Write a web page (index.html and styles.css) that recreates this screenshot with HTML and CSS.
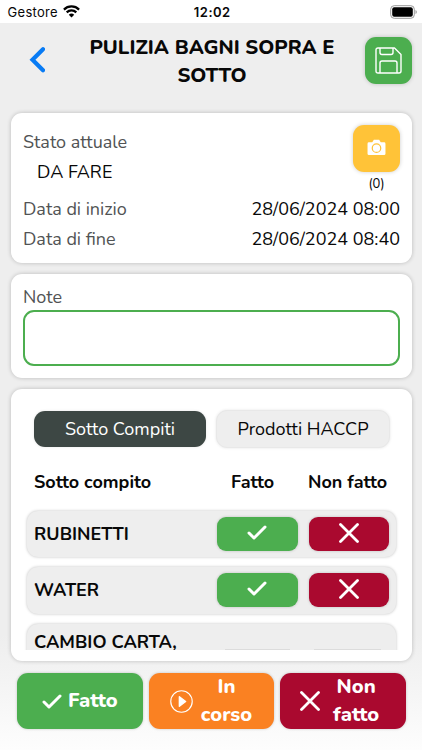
FILE: index.html
```
<!DOCTYPE html>
<html lang="it">
<head>
<meta charset="utf-8">
<meta name="viewport" content="width=device-width, initial-scale=1">
<title>Pulizia bagni</title>
<link rel="stylesheet" href="styles.css">
</head>
<body>
<svg class="defs" width="0" height="0" aria-hidden="true">
  <symbol id="check" viewBox="0 0 20 15"><path d="M2 8l5 5L18 2" fill="none" stroke="#fff" stroke-width="3" stroke-linecap="round" stroke-linejoin="round"/></symbol>
  <symbol id="cross" viewBox="0 0 20 20"><path d="M1.500 1.500l17 17M18.500 1.500l-17 17" fill="none" stroke="#fff" stroke-width="2.800" stroke-linecap="round"/></symbol>
</svg>
<div class="status">
  <div class="carrier"><span>Gestore</span>
    <svg width="17" height="13" viewBox="0 0 17 13"><path d="M.9 4.600a10.800 10.800 0 0 1 15.200 0M3.700 7.400a6.800 6.800 0 0 1 9.600 0" fill="none" stroke="#000" stroke-width="2.200"/><path d="M5.800 9.700a3.900 3.900 0 0 1 5.400 0l-2.700 2.700z"/></svg>
  </div>
  <div class="time">12:02</div>
  <svg class="battery" width="27" height="14" viewBox="0 0 27 14"><rect x=".7" y=".7" width="23.600" height="12.600" rx="3.500" fill="#fff" stroke="#999" stroke-width="1"/><rect x="2.200" y="2.200" width="20.600" height="9.600" rx="2"/><path d="M25.500 5q1.300 .5 1.300 2t-1.300 2z" fill="#999"/></svg>
</div>
<header class="header">
  <svg class="back" width="18" height="28" viewBox="0 0 18 28"><path d="M16 3.300L5.500 13.800 16 24.300" fill="none" stroke="#087bf4" stroke-width="4.200" stroke-linecap="round" stroke-linejoin="miter"/></svg>
  <h1 class="title">PULIZIA BAGNI SOPRA E<br>SOTTO</h1>
  <button class="square save" aria-label="Salva">
    <svg width="27" height="27" viewBox="0 0 27 27" fill="none" stroke="#fff" stroke-width="1.400" stroke-linejoin="round"><path d="M3 1h16.500l6.500 6.500V24q0 2-2 2H3q-2 0-2-2V3q0-2 2-2z"/><path d="M5 1v4.500q0 2 2 2h9q2 0 2-2V1M5 26V16q0-2 2-2h13q2 0 2 2v10"/></svg>
  </button>
</header>
<main class="content">
  <section class="card info">
    <div class="state-row">
      <div class="state"><div class="label">Stato attuale</div><div class="state-value">DA FARE</div></div>
      <div class="photo">
        <button class="square camera" aria-label="Foto"><svg width="19" height="17" viewBox="0 0 20 18"><path d="M2 3.500h3.500L7.200.8h5.600l1.700 2.700H18q1.500 0 1.500 1.500v10.500q0 1.500-1.500 1.500H2Q.5 17 .5 15.500V5q0-1.500 1.500-1.500z" fill="#fff"/><circle cx="10" cy="9.700" r="4.500" fill="#fff" stroke="#ffc338" stroke-width="1.300"/></svg></button>
        <span class="count">(0)</span>
      </div>
    </div>
    <div class="date-row"><span class="label">Data di inizio</span><span>28/06/2024 08:00</span></div>
    <div class="date-row"><span class="label">Data di fine</span><span>28/06/2024 08:40</span></div>
  </section>
  <section class="card notes">
    <div class="label">Note</div>
    <div class="note-box"></div>
  </section>
  <section class="card tasks">
    <div class="tabs"><button class="tab active">Sotto Compiti</button><button class="tab">Prodotti HACCP</button></div>
    <div class="columns"><span>Sotto compito</span><span class="c-done">Fatto</span><span class="c-not">Non fatto</span></div>
    <div class="list">
      <div class="task"><span class="name">RUBINETTI</span><button class="pill green"><svg width="20" height="15"><use href="#check"/></svg></button><button class="pill red"><svg width="20" height="20"><use href="#cross"/></svg></button></div>
      <div class="task"><span class="name">WATER</span><button class="pill green"><svg width="20" height="15"><use href="#check"/></svg></button><button class="pill red"><svg width="20" height="20"><use href="#cross"/></svg></button></div>
      <div class="task tall"><span class="name">CAMBIO CARTA,</span><i class="edge"></i><i class="edge"></i></div>
    </div>
  </section>
</main>
<footer class="actions">
  <button class="action green"><svg width="20" height="15"><use href="#check"/></svg><span>Fatto</span></button>
  <button class="action orange"><svg width="23" height="23" viewBox="0 0 24 24"><circle cx="12" cy="12" r="11.200" fill="none" stroke="#fff" stroke-width="1.200"/><path d="M9.800 7l6.500 5-6.500 5z" fill="#fff" stroke="#fff" stroke-width="1.500" stroke-linejoin="round"/></svg><span>In<br>corso</span></button>
  <button class="action red"><svg width="20" height="20"><use href="#cross"/></svg><span>Non<br>fatto</span></button>
</footer>
</body>
</html>
```
FILE: styles.css
```
* { box-sizing: border-box; }
html { background: #fff; }
body {
  margin: 0;
  width: 422px;
  height: 750px;
  overflow: hidden;
  background: linear-gradient(#eee 0, #eee 635px, #fdfdfd 750px);
  color: #080808;
  font-family: Nunito, Lato, sans-serif;
  font-size: 18px;
}
.defs { display: none; }
button { border: 0; margin: 0; padding: 0; font: inherit; color: inherit; }
svg { display: block; flex: none; }

.status {
  height: 23px;
  background: #fff;
  display: grid;
  grid-template-columns: 1fr auto 1fr;
  align-items: center;
  padding: 0 5px 0 7.500px;
  font-family: Inter, sans-serif;
  font-size: 13px;
}
.carrier { display: flex; align-items: center; gap: 5px; letter-spacing: .3px; }
.time { font-weight: 600; letter-spacing: .5px; }
.battery { justify-self: end; }

.header {
  height: 90px;
  display: grid;
  grid-template-columns: 18px 1fr 47px;
  padding: 10px 10px 0 27px;
}
.back { margin-top: 13px; }
.title {
  margin: 1px 0 0;
  text-align: center;
  font-size: 20.200px;
  font-weight: 800;
  line-height: 28px;
  padding-left: 14px;
  white-space: nowrap;
}
.square {
  flex: none;
  width: 47px;
  height: 47px;
  border-radius: 11px;
  display: flex;
  align-items: center;
  justify-content: center;
  box-shadow: 0 0 4px rgba(0, 0, 0, .2);
}
.save { background: #4cae4f; margin-top: 4px; }
.camera { background: #ffc338; padding-bottom: 2px; margin-top: .5px; }

.content { display: flex; flex-direction: column; gap: 11px; padding: 0 10px 0 11px; }
.card { background: #fff; border-radius: 11px; box-shadow: 0 0 4px rgba(0, 0, 0, .22); }
.info { height: 150px; padding: 11px 12px 0; }
.state-row { display: flex; justify-content: space-between; height: 70px; }
.state { padding-top: 3px; line-height: 30px; }
.state-value { padding-left: 14px; }
.label { color: #515354; }
.photo { display: flex; flex-direction: column; align-items: center; }
.count { font-size: 13px; line-height: 24px; }
.date-row { display: flex; justify-content: space-between; line-height: 30px; height: 30px; }
.notes { height: 104px; padding: 11px 12px 0; line-height: 25px; }
.note-box { height: 56px; border: 2px solid #4cae4f; border-radius: 11px; }

.tasks { height: 272px; padding: 21px 16px 11px; display: flex; flex-direction: column; }
.tabs { display: flex; align-items: center; gap: 10px; padding-left: 7px; height: 38px; flex: none; }
.tab {
  width: 174px;
  height: 38px;
  border-radius: 11px;
  background: #eee;
  border: 1px solid #e8e8e8;
  box-shadow: 0 0 3px rgba(0, 0, 0, .1);
}
.tab.active { width: 172px; height: 36px; background: #3d4744; color: #fff; border: 0; }
.columns {
  display: grid;
  grid-template-columns: 183px 81px 1fr;
  height: 64px;
  align-items: center;
  padding: 4px 0 0 7px;
  font-weight: 700;
  white-space: nowrap;
  flex: none;
}
.c-done { padding-left: 14px; }
.c-not { padding-left: 10px; }
.list {
  height: 142px;
  flex: none;
  overflow: hidden;
  display: flex;
  flex-direction: column;
  gap: 10px;
  margin: -4px -4px 0;
  padding: 3px 4px 0;
}
.task {
  height: 46.300px;
  flex: none;
  background: #eee;
  border-radius: 11px;
  box-shadow: 0 0 3px rgba(0, 0, 0, .25);
  display: grid;
  grid-template-columns: 183px 81px 80px;
  align-items: center;
  padding-left: 7px;
}
.name { font-weight: 700; }
.pill {
  height: 34px;
  border-radius: 9px;
  display: flex;
  align-items: center;
  justify-content: center;
  box-shadow: 0 0 3px rgba(0, 0, 0, .2);
}
.pill + .pill { margin: 0 -11px 0 11px; }
.pill.green svg { margin: 0 1px 3px 0; }
.pill.red svg { margin-bottom: 2px; }
.tall { height: 74px; align-items: start; padding-top: 4px; line-height: 28px; }
.edge { margin: 21px 8px 0; height: 2px; background: #dcdcdc; }
.edge + .edge { margin-left: 16px; margin-right: -3px; }
.green { background: #4cae4f; }
.red { background: #aa092f; }
.orange { background: #fa8122; }

.actions {
  display: grid;
  grid-template-columns: repeat(3, 1fr);
  gap: 6px;
  padding: 12px 16px 0 17px;
}
.action {
  height: 56px;
  border-radius: 11px;
  color: #fff;
  display: flex;
  align-items: center;
  justify-content: center;
  font-size: 20.200px;
  font-weight: 800;
  line-height: 28px;
  box-shadow: 0 0 3px rgba(0, 0, 0, .2);
}
.action.green { gap: 6px; }
.action.orange { gap: 8px; padding-right: 1px; }
.action.red { gap: 13px; padding-right: 7px; }
```
